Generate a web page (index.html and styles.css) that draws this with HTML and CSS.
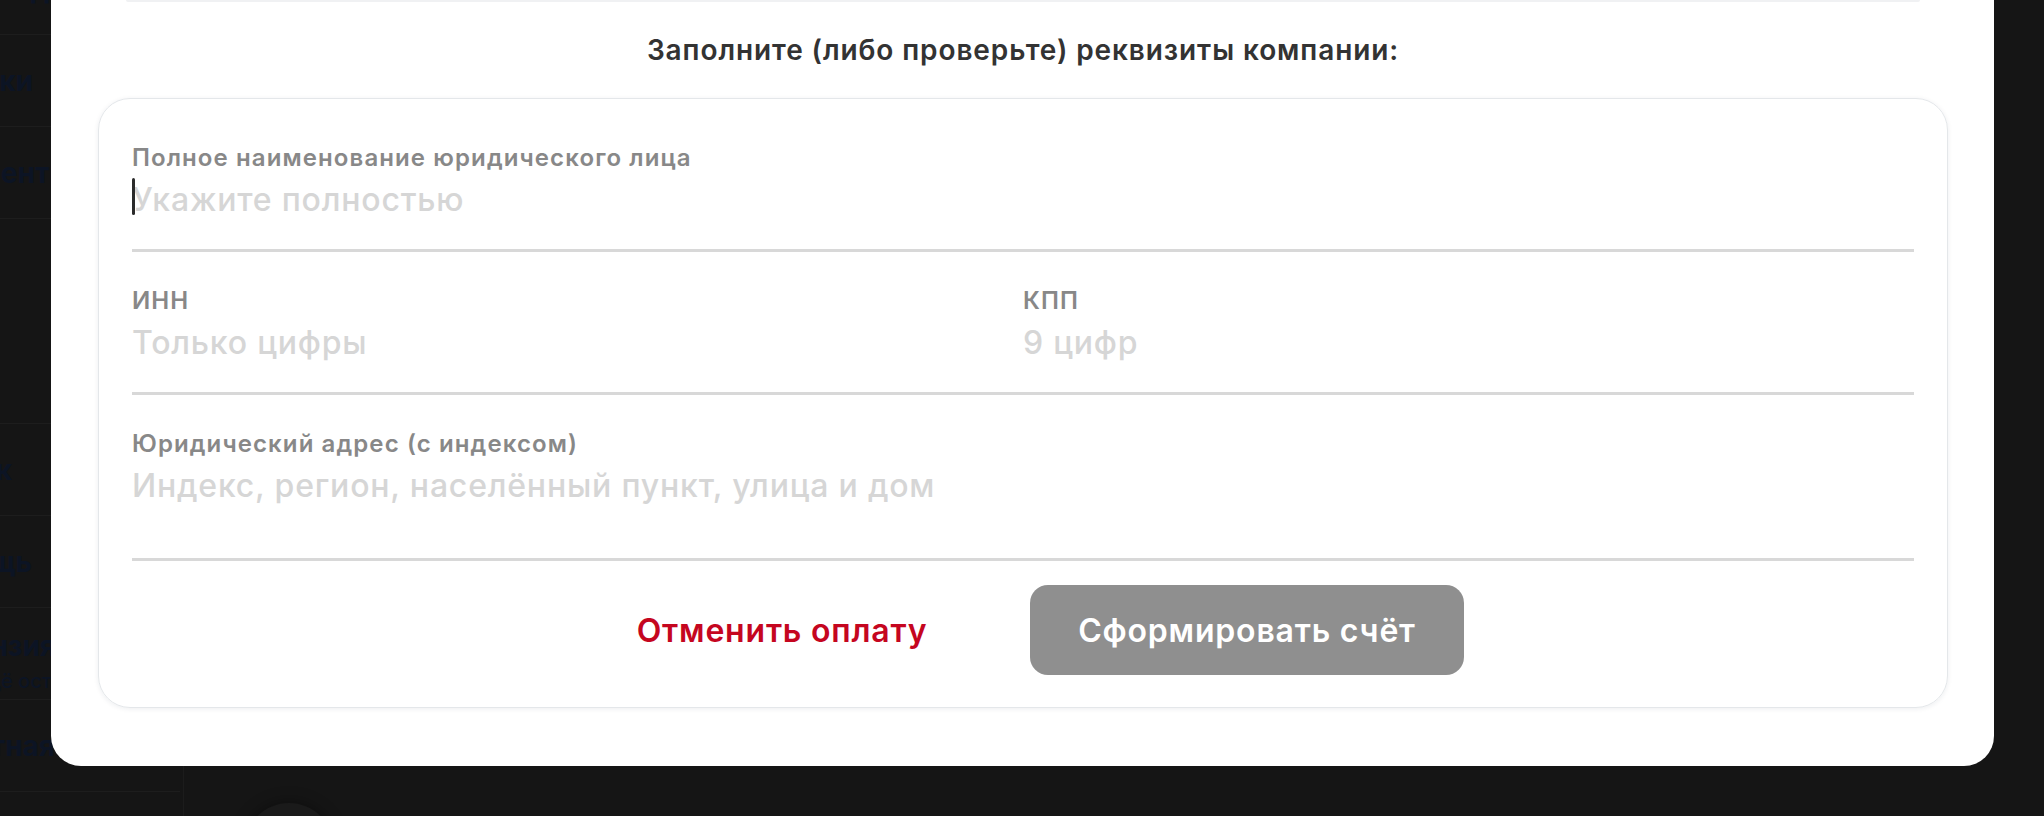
FILE: index.html
```html
<!DOCTYPE html>
<html lang="ru">
<head>
    <meta charset="UTF-8">
    <meta name="viewport" content="width=device-width, initial-scale=1.0">
    <title>Реквизиты компании</title>
    <link rel="stylesheet" href="styles.css">
</head>
<body>

    <div class="page">
        <aside class="sidebar">
            <ul class="side-menu">
                <li class="side-item side-item--top"><span class="side-text end-100">Календарь</span></li>
                <li class="side-item"><span class="side-text end-33">Заявки</span></li>
                <li class="side-item"><span class="side-text end-72">Документы</span></li>
                <li class="side-item side-item--gap"></li>
                <li class="side-item"><span class="side-text end-12">Банк</span></li>
                <li class="side-item"><span class="side-text end-32">Помощь</span></li>
                <li class="side-item side-item--double">
                    <span class="side-text end-56">Лицензия</span>
                    <span class="side-text side-text--small end-190">Ещё осталось 14 дней</span>
                </li>
                <li class="side-item"><span class="side-text end-55">Бесплатная</span></li>
            </ul>
        </aside>
        <main class="content">
            <div class="avatar"></div>
        </main>
    </div>

    <!-- Окно с реквизитами поверх страницы -->
    <div class="modal">
        <div class="modal-edge"></div>
        <h2 class="modal-title">Заполните (либо проверьте) реквизиты компании:</h2>

        <form class="req-card">
            <div class="group">
                <label class="field">
                    <span class="field-label">Полное наименование юридического лица</span>
                    <span class="field-box">
                        <span class="caret"></span>
                        <input type="text" placeholder="Укажите полностью">
                    </span>
                </label>
            </div>

            <div class="group group--split">
                <label class="field">
                    <span class="field-label">ИНН</span>
                    <span class="field-box"><input type="text" placeholder="Только цифры"></span>
                </label>
                <label class="field">
                    <span class="field-label">КПП</span>
                    <span class="field-box"><input type="text" placeholder="9 цифр"></span>
                </label>
            </div>

            <div class="group">
                <label class="field">
                    <span class="field-label">Юридический адрес (с индексом)</span>
                    <span class="field-box">
                        <textarea placeholder="Индекс, регион, населённый пункт, улица и дом"></textarea>
                    </span>
                </label>
            </div>

            <div class="actions">
                <button type="button" class="btn-cancel">Отменить оплату</button>
                <button type="submit" class="btn-submit">Сформировать счёт</button>
            </div>
        </form>
    </div>

</body>
</html>
```
FILE: styles.css
```css
/* Страница под затемнением */
body {
    margin: 0;
    width: 2044px;
    height: 816px;
    overflow: hidden;
    background-color: #151515;
    font-family: Inter, "Noto Sans", sans-serif;
    position: relative;
}

.page {
    display: flex;
    height: 100%;
    overflow: hidden;
}

.sidebar {
    width: 183px;
    flex-shrink: 0;
    border-right: 1px solid #1c1c1c;
    overflow: hidden;
}

.side-menu {
    list-style: none;
    margin: -57px 3px 0 0;
    padding: 0;
}

.side-item {
    height: 91px;
    border-bottom: 1px solid #1d1d1d;
    display: flex;
    flex-direction: column;
    justify-content: center;
}

.side-item--gap {
    height: 204px;
}

.side-item--double {
    justify-content: flex-start;
    padding-top: 20px;
    height: 71px;
}

/* текст пунктов прижат к правому краю, лишнее уходит влево */
.side-text {
    display: flex;
    justify-content: flex-end;
    white-space: nowrap;
    font-size: 28px;
    font-weight: 700;
    color: #0c1424;
    line-height: 36px;
}

.side-text--small {
    font-size: 20px;
    font-weight: 500;
    line-height: 26px;
    margin-top: 4px;
}

.end-12 { width: 12px; }
.end-32 { width: 32px; }
.end-33 { width: 33px; }
.end-55 { width: 55px; }
.end-56 { width: 56px; }
.end-72 { width: 72px; }
.end-100 { width: 100px; }
.end-190 { width: 190px; }

.content {
    flex: 1;
    padding: 803px 0 0 60px;
}

.avatar {
    width: 90px;
    height: 90px;
    border-radius: 50%;
    background: #1a1a1a;
    box-shadow: 0 0 16px rgba(0, 0, 0, 0.4);
}

/* Модальное окно */
.modal {
    position: absolute;
    top: 0;
    left: 51px;
    width: 1943px;
    box-sizing: border-box;
    padding: 0 46px 58px 47px;
    background: #fff;
    border-radius: 0 0 30px 30px;
}

.modal-edge {
    height: 2px;
    margin: 0 28px;
    background: #f0f1f3;
    border-radius: 0 0 20px 20px;
}

.modal-title {
    margin: 30px 0 30px;
    text-align: center;
    font-size: 28px;
    line-height: 36px;
    font-weight: 600;
    letter-spacing: 0.9px;
    color: #333;
}

.req-card {
    border: 1px solid #e4e7ea;
    border-radius: 32px;
    box-shadow: 0 1px 5px rgba(30, 40, 60, 0.08);
    padding: 44px 33px 32px;
}

.group {
    padding-bottom: 29px;
    border-bottom: 3px solid #d8d8d8;
}

.group + .group {
    padding-top: 34px;
}

.group--split {
    display: grid;
    grid-template-columns: 1fr 1fr;
}

.field {
    display: block;
}

.field-label {
    display: block;
    font-size: 24px;
    line-height: 30px;
    font-weight: 600;
    letter-spacing: 1.1px;
    color: #888;
    margin-bottom: 7px;
}

.field-box {
    display: block;
    position: relative;
}

input,
textarea {
    display: block;
    width: 100%;
    box-sizing: border-box;
    border: none;
    outline: none;
    padding: 0;
    margin: 0;
    background: transparent;
    font-family: Inter, "Noto Sans", sans-serif;
    font-size: 32px;
    font-weight: 500;
    line-height: 40px;
    letter-spacing: 0.8px;
    color: #333;
}

input {
    height: 40px;
}

textarea {
    height: 63px;
    resize: none;
    overflow: hidden;
}

input::placeholder,
textarea::placeholder {
    color: #d6d6d6;
}

.caret {
    position: absolute;
    left: 0;
    top: -2px;
    width: 3px;
    height: 37px;
    border-radius: 2px;
    background: #2b2b2b;
}

.actions {
    display: flex;
    justify-content: center;
    gap: 31px;
    margin-top: 24px;
    padding-right: 17px;
}

.actions button {
    font-family: Inter, "Noto Sans", sans-serif;
    font-size: 32px;
    font-weight: 600;
    letter-spacing: 0.8px;
    height: 90px;
    width: 434px;
    border: none;
    border-radius: 18px;
    cursor: pointer;
}

.btn-cancel {
    background: transparent;
    color: #c5061f;
}

.btn-submit {
    background: #8f8f8f;
    color: #fff;
}
```
